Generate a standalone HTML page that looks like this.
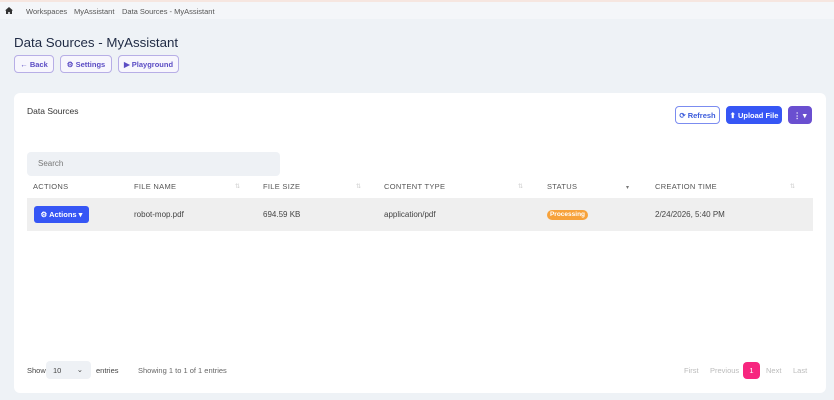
<!DOCTYPE html>
<html><head><style>
*{box-sizing:border-box;margin:0;padding:0}
body{width:834px;height:400px;background:#eef2f6;font-family:"Liberation Sans",sans-serif;position:relative;overflow:hidden;color:#333}
.a{position:absolute;white-space:nowrap}
.bc{top:0;left:0;width:834px;height:19px;background:#f4f6f9;border-top:2px solid #f6e6e0;font-size:7.5px;color:#555}
.btn{position:absolute;height:18px;border:1px solid #b7aee6;border-radius:4px;background:#f7f6fd;color:#5b4cc4;font-size:7.5px;font-weight:bold;display:flex;align-items:center;justify-content:center;gap:3px}
.card{top:93px;left:14px;width:812px;height:300px;background:#fff;border-radius:6px}
.th{top:182px;font-size:7.5px;color:#555;letter-spacing:.3px}
.td{top:210px;font-size:8px;color:#444}
.s{color:#ccc;font-size:6px}
.pg{top:366px;font-size:7.5px;color:#bbb}
</style></head><body>
<div class="a bc">
 <svg class="a" style="left:5px;top:5px" width="8" height="7" viewBox="0 0 8 7"><path d="M4 0L0 3.5h1V7h2.2V5h1.6v2H7V3.5h1z" fill="#333"/></svg>
 <span class="a" style="left:26px;top:5px">Workspaces</span>
 <span class="a" style="left:74px;top:5px">MyAssistant</span>
 <span class="a" style="left:122px;top:5px">Data Sources - MyAssistant</span>
</div>
<div class="a" style="left:14px;top:35px;font-size:13.3px;color:#1f2a44">Data Sources - MyAssistant</div>
<div class="btn" style="left:14px;top:55px;width:40px">← Back</div>
<div class="btn" style="left:60px;top:55px;width:52px">⚙ Settings</div>
<div class="btn" style="left:118px;top:55px;width:61px">▶ Playground</div>
<div class="a card"></div>
<div class="a" style="left:27px;top:106px;font-size:8.5px;color:#333">Data Sources</div>
<div class="btn" style="left:675px;top:106px;width:45px;height:18px;background:#fff;border-color:#7b8cf0;color:#3b5bdb">⟳ Refresh</div>
<div class="btn" style="left:726px;top:106px;width:56px;height:18px;background:#3656f5;border-color:#3656f5;color:#fff">⬆ Upload File</div>
<div class="btn" style="left:788px;top:106px;width:24px;height:18px;background:#6a4fd0;border-color:#6a4fd0;color:#fff">⋮ ▾</div>
<div class="a" style="left:27px;top:152px;width:253px;height:24px;background:#eef1f5;border-radius:4px;font-size:8px;color:#777;padding:7px 11px">Search</div>
<div class="a th" style="left:33px">ACTIONS</div>
<div class="a th" style="left:134px">FILE NAME</div><div class="a s" style="left:235px;top:183px">⇅</div>
<div class="a th" style="left:263px">FILE SIZE</div><div class="a s" style="left:356px;top:183px">⇅</div>
<div class="a th" style="left:384px">CONTENT TYPE</div><div class="a s" style="left:518px;top:183px">⇅</div>
<div class="a th" style="left:547px">STATUS</div><div class="a" style="left:626px;top:184px;font-size:6px;color:#777">▾</div>
<div class="a th" style="left:655px">CREATION TIME</div><div class="a s" style="left:790px;top:183px">⇅</div>
<div class="a" style="left:27px;top:198px;width:786px;height:33px;background:#efefef"></div>
<div class="a" style="left:34px;top:206px;width:55px;height:17px;background:#3656f5;border-radius:3px;color:#fff;font-size:7.5px;font-weight:bold;display:flex;align-items:center;justify-content:center">⚙ Actions ▾</div>
<div class="a td" style="left:134px">robot-mop.pdf</div>
<div class="a td" style="left:263px">694.59 KB</div>
<div class="a td" style="left:384px">application/pdf</div>
<div class="a" style="left:547px;top:210px;width:41px;height:10px;background:#f7a23b;border-radius:5px;color:#fff;font-size:6.5px;font-weight:bold;text-align:center;line-height:10px">Processing</div>
<div class="a td" style="left:655px">2/24/2026, 5:40 PM</div>
<div class="a" style="left:27px;top:366px;font-size:7.5px;color:#444">Show</div>
<div class="a" style="left:46px;top:361px;width:45px;height:18px;background:#eef1f5;border-radius:4px;font-size:7.5px;color:#444;padding:5px 7px">10<span style="position:absolute;right:8px;top:4px">⌄</span></div>
<div class="a" style="left:96px;top:366px;font-size:7.5px;color:#444">entries</div>
<div class="a" style="left:138px;top:366px;font-size:7.5px;color:#666">Showing 1 to 1 of 1 entries</div>
<div class="a pg" style="left:684px">First</div>
<div class="a pg" style="left:710px">Previous</div>
<div class="a" style="left:743px;top:362px;width:17px;height:17px;background:#f7267f;border-radius:4px;color:#fff;font-size:7.5px;text-align:center;line-height:17px">1</div>
<div class="a pg" style="left:766px">Next</div>
<div class="a pg" style="left:793px">Last</div>
</body></html>
